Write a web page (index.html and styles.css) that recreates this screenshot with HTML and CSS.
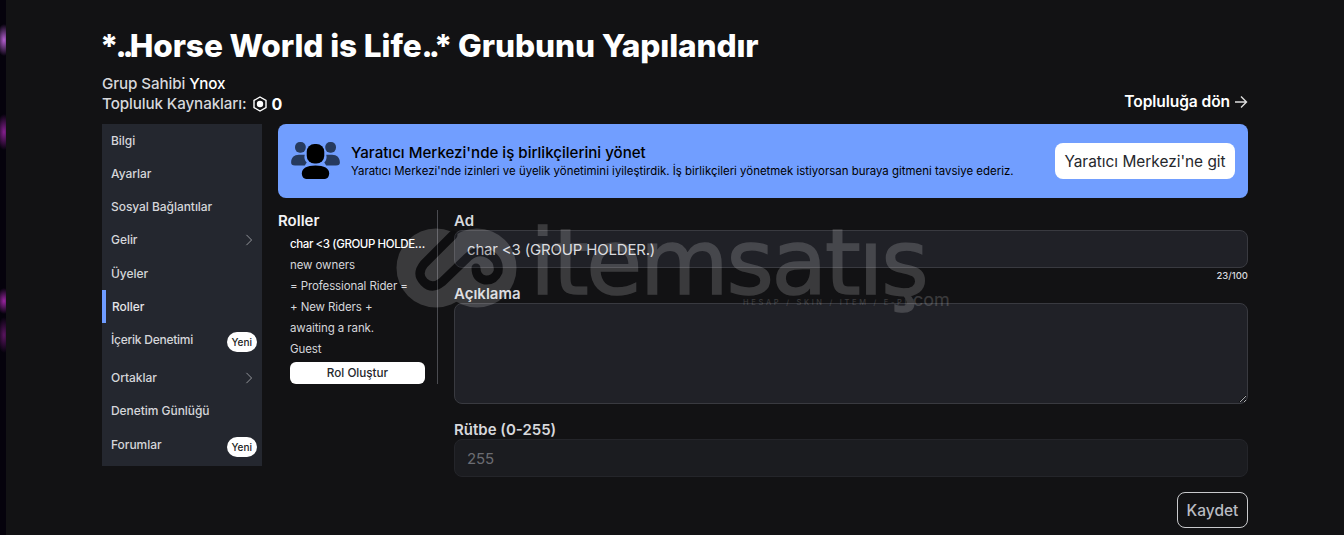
FILE: index.html
```html
<!DOCTYPE html>
<html lang="tr">
<head>
    <meta charset="UTF-8">
    <title>Grubu Yapılandır</title>
    <link rel="stylesheet" href="styles.css">
</head>
<body>
<div class="strip"></div>
<div class="page">
    <h1 class="title"><span class="star-a">*</span><span class="dots">..</span>Horse World is Life<span class="dots">..</span><span class="star-b">*</span> Grubunu Yapılandır</h1>
    <div class="head-row">
        <div class="owner">
            <div>Grup Sahibi <span class="white">Ynox</span></div>
            <div class="funds">Topluluk Kaynakları:
                <svg class="robux" viewBox="0 0 16 16"><path d="M8 1l6 3.5v7L8 15l-6-3.5v-7z" fill="none" stroke="#fff" stroke-width="1.4"/><circle cx="8" cy="8" r="3.2" fill="#fff"/></svg>
                <span class="white bold">0</span>
            </div>
        </div>
        <a class="back">Topluluğa dön
            <svg class="arrow" viewBox="0 0 14 14"><path d="M1 7h11.5M7 1.5L12.5 7 7 12.5" fill="none" stroke="#ddd" stroke-width="1.4"/></svg>
        </a>
    </div>
    <div class="columns">
        <div class="side">
            <div class="side-item">Bilgi</div>
            <div class="side-item">Ayarlar</div>
            <div class="side-item">Sosyal Bağlantılar</div>
            <div class="side-item gelir">Gelir <svg class="chev" viewBox="0 0 8 14"><path d="M1 1l6 6-6 6" fill="none" stroke="#9a9ca3" stroke-width="1.1"/></svg></div>
            <div class="side-item">Üyeler</div>
            <div class="side-item active">Roller</div>
            <div class="side-item tall">İçerik Denetimi <span class="badge">Yeni</span></div>
            <div class="side-item">Ortaklar <svg class="chev" viewBox="0 0 8 14"><path d="M1 1l6 6-6 6" fill="none" stroke="#9a9ca3" stroke-width="1.1"/></svg></div>
            <div class="side-item">Denetim Günlüğü</div>
            <div class="side-item">Forumlar <span class="badge">Yeni</span></div>
        </div>
        <div class="main">
            <div class="banner">
                <svg class="people" viewBox="0 0 50 40">
                    <g fill="#263a5e">
                        <rect x="4" y="1" width="11" height="11" rx="5"/>
                        <path d="M0 22c0-5 3-8 8-8h6c-1 3 0 6 2 8l-2 3H4c-3 0-4-1-4-3z"/>
                        <rect x="35" y="1" width="11" height="11" rx="5"/>
                        <path d="M50 22c0-5-3-8-8-8h-6c1 3 0 6-2 8l2 3h10c3 0 4-1 4-3z"/>
                    </g>
                    <rect x="16" y="3" width="18" height="20" rx="8"/>
                    <path d="M11 33c0-5 5-8 14-8s14 3 14 8c0 4-2 6-6 6H17c-4 0-6-2-6-6z"/>
                </svg>
                <div class="banner-text">
                    <div class="banner-title">Yaratıcı Merkezi'nde iş birlikçilerini yönet</div>
                    <div class="banner-sub">Yaratıcı Merkezi'nde izinleri ve üyelik yönetimini iyileştirdik. İş birlikçileri yönetmek istiyorsan buraya gitmeni tavsiye ederiz.</div>
                </div>
                <button class="banner-btn">Yaratıcı Merkezi'ne git</button>
            </div>
            <div class="roles-form">
                <div class="roles">
                    <div class="roles-title">Roller</div>
                    <div class="role first">char &lt;3 (GROUP HOLDE…</div>
                    <div class="role">new owners</div>
                    <div class="role">= Professional Rider =</div>
                    <div class="role">+ New Riders +</div>
                    <div class="role">awaiting a rank.</div>
                    <div class="role">Guest</div>
                    <button class="role-btn">Rol Oluştur</button>
                </div>
                <div class="form">
                    <label class="lbl">Ad</label>
                    <input class="field" type="text" value="char &lt;3 (GROUP HOLDER.)">
                    <div class="count">23/100</div>
                    <label class="lbl">Açıklama</label>
                    <textarea class="field area"></textarea>
                    <label class="lbl lbl-rank">Rütbe (0-255)</label>
                    <input class="field off" type="text" placeholder="255" disabled>
                    <div class="actions"><button class="save">Kaydet</button></div>
                </div>
            </div>
        </div>
    </div>
</div>
<div class="watermark">
    <svg class="wm-logo" viewBox="0 0 121 80">
        <circle cx="40" cy="40" r="39.5" fill="#fff"/>
        <circle cx="81" cy="40" r="39.5" fill="#fff"/>
        <path d="M57 7L28 36Q20 46 28 54Q36 62 46 54L72 29Q82 20 93 26Q104 32 102 44Q98 53 89 52Q80 50 80 40" fill="none" stroke="#000" stroke-width="9" stroke-linecap="round"/>
    </svg>
    <div class="wm-name">itemsatış</div>
    <div class="wm-sub">HESAP / SKIN / ITEM / E-PIN</div>
    <div class="wm-com">com</div>
</div>
</body>
</html>
```
FILE: styles.css
```css
*{
    box-sizing: border-box;
}
html, body{
    height: 100%;
}
body{
    margin: 0;
    display: flex;
    height: 535px;
    overflow: hidden;
    background-color: #121214;
    color: #d7d8dc;
    font-family: Inter, "Liberation Sans", sans-serif;
}
.strip{
    width: 6px;
    flex: none;
    background-color: #05020c;
    background-image:
        radial-gradient(ellipse 8px 16px at 4px 40px, #b45fd0, transparent),
        radial-gradient(ellipse 8px 18px at 4px 132px, #85208f, transparent),
        radial-gradient(ellipse 8px 13px at 4px 301px, #98259f, transparent),
        radial-gradient(ellipse 7px 18px at 4px 335px, #5a1560, transparent);
}
.page{
    flex: 1;
    padding: 26px 96px 0 96px;
}
.title{
    margin: 0;
    font-size: 31.6px;
    line-height: 40px;
    font-weight: 800;
    letter-spacing: -0.1px;
    color: #fff;
}
.dots{
    letter-spacing: -4px;
}
.star-a{
    margin-left: -2px;
    letter-spacing: -3px;
}
.star-b{
    margin-left: -2px;
    letter-spacing: -1px;
}
.head-row{
    display: flex;
    justify-content: space-between;
    align-items: flex-end;
    margin-top: 7px;
    height: 41px;
}
.owner{
    font-size: 15.2px;
    line-height: 20px;
    font-weight: 500;
    letter-spacing: -0.1px;
}
.funds{
    display: flex;
    align-items: center;
    gap: 5px;
}
.white{
    color: #fff;
}
.bold{
    margin-left: -1px;
    font-weight: 700;
    font-size: 16px;
}
.robux{
    width: 16px;
    height: 16px;
}
.back{
    display: flex;
    align-items: center;
    gap: 4px;
    margin-bottom: 3px;
    font-size: 15.6px;
    font-weight: 600;
    letter-spacing: -0.1px;
    color: #fff;
}
.arrow{
    width: 14px;
    height: 14px;
}
.columns{
    display: flex;
    gap: 16px;
    margin-top: 10px;
}
.side{
    width: 160px;
    height: 342px;
    flex: none;
    background-color: #24272f;
}
.side-item{
    display: flex;
    align-items: center;
    justify-content: space-between;
    height: 33.2px;
    padding: 0 5px 0 9px;
    font-size: 12px;
    font-weight: 500;
    letter-spacing: -0.05px;
    color: #d5d6da;
}
.side-item.gelir{
    padding-bottom: 1px;
}
.side-item.active{
    border-left: 4px solid #6e9bff;
    padding-left: 6px;
    color: #e4e5e8;
}
.side-item.tall{
    height: 38px;
    padding-bottom: 5px;
    letter-spacing: -0.25px;
}
.badge{
    margin-top: 5px;
    padding: 0 5px;
    height: 20px;
    line-height: 20px;
    border-radius: 10px;
    background-color: #fff;
    color: #222;
    font-size: 10px;
    font-weight: 500;
    letter-spacing: 0;
}
.chev{
    width: 8px;
    height: 12px;
    margin-right: 4px;
}
.main{
    flex: 1;
    min-width: 0;
}
.banner{
    display: flex;
    align-items: center;
    height: 74px;
    padding: 0 13px;
    border-radius: 8px;
    background-color: #719eff;
    color: #000;
}
.people{
    width: 49px;
    height: 39px;
    flex: none;
    margin-top: -2px;
}
.banner-text{
    flex: 1;
    margin-left: 11px;
}
.banner-title{
    font-size: 15.1px;
    line-height: 20px;
    font-weight: 500;
}
.banner-sub{
    font-size: 11.44px;
    line-height: 16px;
}
.banner-btn{
    width: 180px;
    height: 36px;
    border: 0;
    border-radius: 8px;
    background-color: #fff;
    color: #25272c;
    font-family: inherit;
    font-size: 15.4px;
    font-weight: 400;
}
.roles-form{
    display: flex;
    margin-top: 12px;
}
.roles{
    width: 160px;
    height: 174px;
    flex: none;
    padding-right: 12px;
    border-right: 1px solid #4a4b50;
}
.roles-title{
    height: 24px;
    padding-top: 2px;
    font-size: 15px;
    line-height: 18px;
    font-weight: 600;
    color: #f2f2f4;
}
.role{
    height: 21px;
    line-height: 21px;
    margin-left: 12px;
    font-size: 11.5px;
    font-weight: 400;
    letter-spacing: -0.1px;
    color: #d5d6da;
    white-space: nowrap;
}
.role.first{
    color: #fff;
    font-weight: 500;
    letter-spacing: -0.4px;
}
.role-btn{
    display: block;
    width: 135px;
    height: 22px;
    margin: 2px 0 0 12px;
    border: 0;
    border-radius: 6px;
    background-color: #fff;
    color: #25272c;
    font-family: inherit;
    font-size: 11.7px;
    font-weight: 500;
}
.form{
    flex: 1;
    display: flex;
    flex-direction: column;
    padding-left: 16px;
}
.lbl{
    height: 20px;
    padding-top: 2px;
    font-size: 15px;
    line-height: 18px;
    font-weight: 600;
    color: #d7d8dc;
}
.field{
    display: block;
    width: 100%;
    height: 38px;
    flex: none;
    padding: 0 12px;
    border: 1px solid #393a40;
    border-radius: 8px;
    background-color: #202127;
    color: #d7d8dc;
    font-family: inherit;
    font-size: 15px;
    letter-spacing: -0.18px;
    outline: none;
}
.area{
    height: 101px;
}
.off{
    border-color: #24252a;
    background-color: #1b1c20;
}
.off::placeholder{
    color: #6b6c72;
    opacity: 1;
}
.count{
    height: 15px;
    line-height: 15px;
    text-align: right;
    font-size: 9.5px;
    font-weight: 500;
}
.lbl-rank{
    margin-top: 15px;
}
.actions{
    display: flex;
    justify-content: flex-end;
    margin-top: 15px;
}
.save{
    width: 71px;
    height: 36px;
    border: 1px solid #c8c9cc;
    border-radius: 8px;
    background: transparent;
    color: #b9bbc2;
    font-family: inherit;
    font-size: 15.5px;
    font-weight: 500;
}
.watermark{
    position: absolute;
    left: 396px;
    top: 228px;
    width: 560px;
    height: 90px;
    pointer-events: none;
    color: #fff;
    opacity: 0.17;
}
.wm-logo{
    position: absolute;
    left: 0;
    top: 0;
    width: 121px;
    height: 80px;
}
.wm-name{
    position: absolute;
    left: 134px;
    top: 0;
    height: 70px;
    font-family: "DejaVu Sans", sans-serif;
    font-size: 91px;
    line-height: 70px;
    letter-spacing: -2.3px;
    white-space: nowrap;
    -webkit-text-stroke: 1.5px #fff;
}
.wm-sub{
    position: absolute;
    left: 347px;
    top: 70px;
    font-size: 7.5px;
    line-height: 10px;
    letter-spacing: 2.7px;
    white-space: nowrap;
}
.wm-com{
    position: absolute;
    left: 517px;
    top: 62px;
    font-size: 18px;
    line-height: 20px;
}
```
